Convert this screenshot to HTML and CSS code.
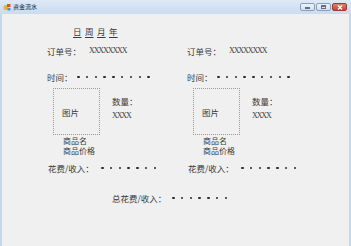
FILE: index.html
```html
<!DOCTYPE html>
<html lang="zh">
<head>
<meta charset="utf-8">
<title>资金流水</title>
<link rel="stylesheet" href="styles.css">
</head>
<body>
<div class="window">
  <div class="titlebar">
    <svg class="app-icon" width="8" height="8" viewBox="0 0 8 8">
      <circle cx="3" cy="4.5" r="2.6" fill="#e8b530"/>
      <rect x="4" y="1" width="3.5" height="3" fill="#d9553a"/>
      <rect x="4.5" y="5" width="3" height="2.5" fill="#5d8ec9"/>
    </svg>
    <span class="title">资金流水</span>
    <div class="controls">
      <span class="btn"><i class="min-glyph"></i></span>
      <span class="btn"><i class="max-glyph"></i></span>
      <span class="btn close"><svg width="6" height="5" viewBox="0 0 6 5"><path d="M1 0.5 L5 4.5 M5 0.5 L1 4.5" stroke="#fff" stroke-width="1.3"/></svg></span>
    </div>
  </div>
  <div class="client">
    <div class="tabs">
      <span class="tab">日</span><span class="tab">周</span><span class="tab">月</span><span class="tab">年</span>
    </div>
    <div class="columns">
      <div class="col">
        <div class="row order"><span class="label">订单号：</span><span class="xval">XXXXXXXX</span></div>
        <div class="row time"><span class="label-short">时间：</span><span class="dots"><i></i><i></i><i></i><i></i><i></i><i></i><i></i><i></i><i></i></span></div>
        <div class="product">
          <div class="pic">图片</div>
          <div class="qty"><span>数量：</span><span class="xval">XXXX</span></div>
        </div>
        <div class="names"><span>商品名</span><span>商品价格</span></div>
        <div class="row cost"><span class="label-cost">花费/收入：</span><span class="dots"><i></i><i></i><i></i><i></i><i></i><i></i><i></i></span></div>
      </div>
      <div class="col">
        <div class="row order"><span class="label">订单号：</span><span class="xval">XXXXXXXX</span></div>
        <div class="row time"><span class="label-short">时间：</span><span class="dots"><i></i><i></i><i></i><i></i><i></i><i></i><i></i><i></i><i></i></span></div>
        <div class="product">
          <div class="pic">图片</div>
          <div class="qty"><span>数量：</span><span class="xval">XXXX</span></div>
        </div>
        <div class="names"><span>商品名</span><span>商品价格</span></div>
        <div class="row cost"><span class="label-cost">花费/收入：</span><span class="dots"><i></i><i></i><i></i><i></i><i></i><i></i><i></i></span></div>
      </div>
    </div>
    <div class="row total"><span class="label-total">总花费/收入：</span><span class="dots"><i></i><i></i><i></i><i></i><i></i><i></i><i></i></span></div>
  </div>
</div>
</body>
</html>
```
FILE: styles.css
```css
* { box-sizing: border-box; }
html, body { margin: 0; padding: 0; }
body {
  width: 351px;
  height: 246px;
  overflow: hidden;
  font-family: "Liberation Serif", "Noto Sans CJK SC", serif;
  color: #3a3a3a;
}
.window {
  width: 351px;
  height: 246px;
  display: flex;
  flex-direction: column;
  background: #c3d8ee;
}
.titlebar {
  height: 14px;
  display: flex;
  align-items: center;
  padding: 0 3px 0 3px;
  background: linear-gradient(#dde9f6, #cadcef);
}
.app-icon { flex: none; }
.title {
  margin-left: 2px;
  font-family: "Noto Sans CJK SC", sans-serif;
  font-size: 6px;
  color: #1e1e1e;
  line-height: 8px;
}
.controls {
  margin-left: auto;
  display: flex;
  gap: 1px;
  padding-right: 1px;
}
.btn {
  width: 15px;
  height: 8px;
  border: 1px solid #8a9ebb;
  border-radius: 2px;
  background: linear-gradient(#eef3fa, #d4e0ef);
  display: flex;
  align-items: center;
  justify-content: center;
}
.btn.close {
  background: linear-gradient(#e4806a, #c8432e);
  border-color: #9c3b2f;
}
.min-glyph {
  display: block;
  width: 5px;
  height: 2px;
  margin-top: 2px;
  background: #5d6f89;
}
.max-glyph {
  display: block;
  width: 5px;
  height: 4px;
  border: 1px solid #5d6f89;
  border-top-width: 2px;
}
.client {
  flex: 1;
  margin: 0 2px 0 2px;
  background: #f0f0f0;
  padding: 12px 0 0 45px;
  font-family: "Noto Sans CJK SC", sans-serif;
  font-size: 8.5px;
  line-height: 10px;
}
.tabs {
  display: flex;
  gap: 3.5px;
  padding-left: 26px;
  height: 10px;
}
.tab {
  text-decoration: underline;
  text-underline-offset: 1.5px;
}
.columns {
  margin-top: 10px;
  display: grid;
  grid-template-columns: 140px 140px;
}
.col { display: flex; flex-direction: column; }
.row { display: flex; align-items: center; height: 10px; }
.label { width: 42px; }
.label-short { width: 30px; }
.label-cost { width: 54px; padding-left: 1px; }
.label-total { width: 60px; }
.xval {
  font-family: "Liberation Serif", serif;
  font-size: 8px;
  letter-spacing: -1.1px;
}
.time { margin-top: 16px; }
.dots { display: flex; gap: 6.3px; }
.dots i {
  display: block;
  width: 2.5px;
  height: 2.5px;
  border-radius: 50%;
  background: #2a2a2a;
}
.product {
  margin-top: 6px;
  display: flex;
  padding-left: 6px;
}
.pic {
  width: 47px;
  height: 47px;
  border: 1px dotted #9a9a9a;
  display: flex;
  align-items: center;
  justify-content: center;
  padding-right: 12px;
  padding-top: 1px;
}
.qty {
  margin-left: 12px;
  padding-top: 8px;
  display: flex;
  flex-direction: column;
  gap: 5px;
}
.names {
  margin-top: 1px;
  padding-left: 16px;
  display: flex;
  flex-direction: column;
  font-size: 8px;
  line-height: 9.5px;
}
.cost { margin-top: 8px; }
.total { margin-top: 20px; padding-left: 65px; }
```
